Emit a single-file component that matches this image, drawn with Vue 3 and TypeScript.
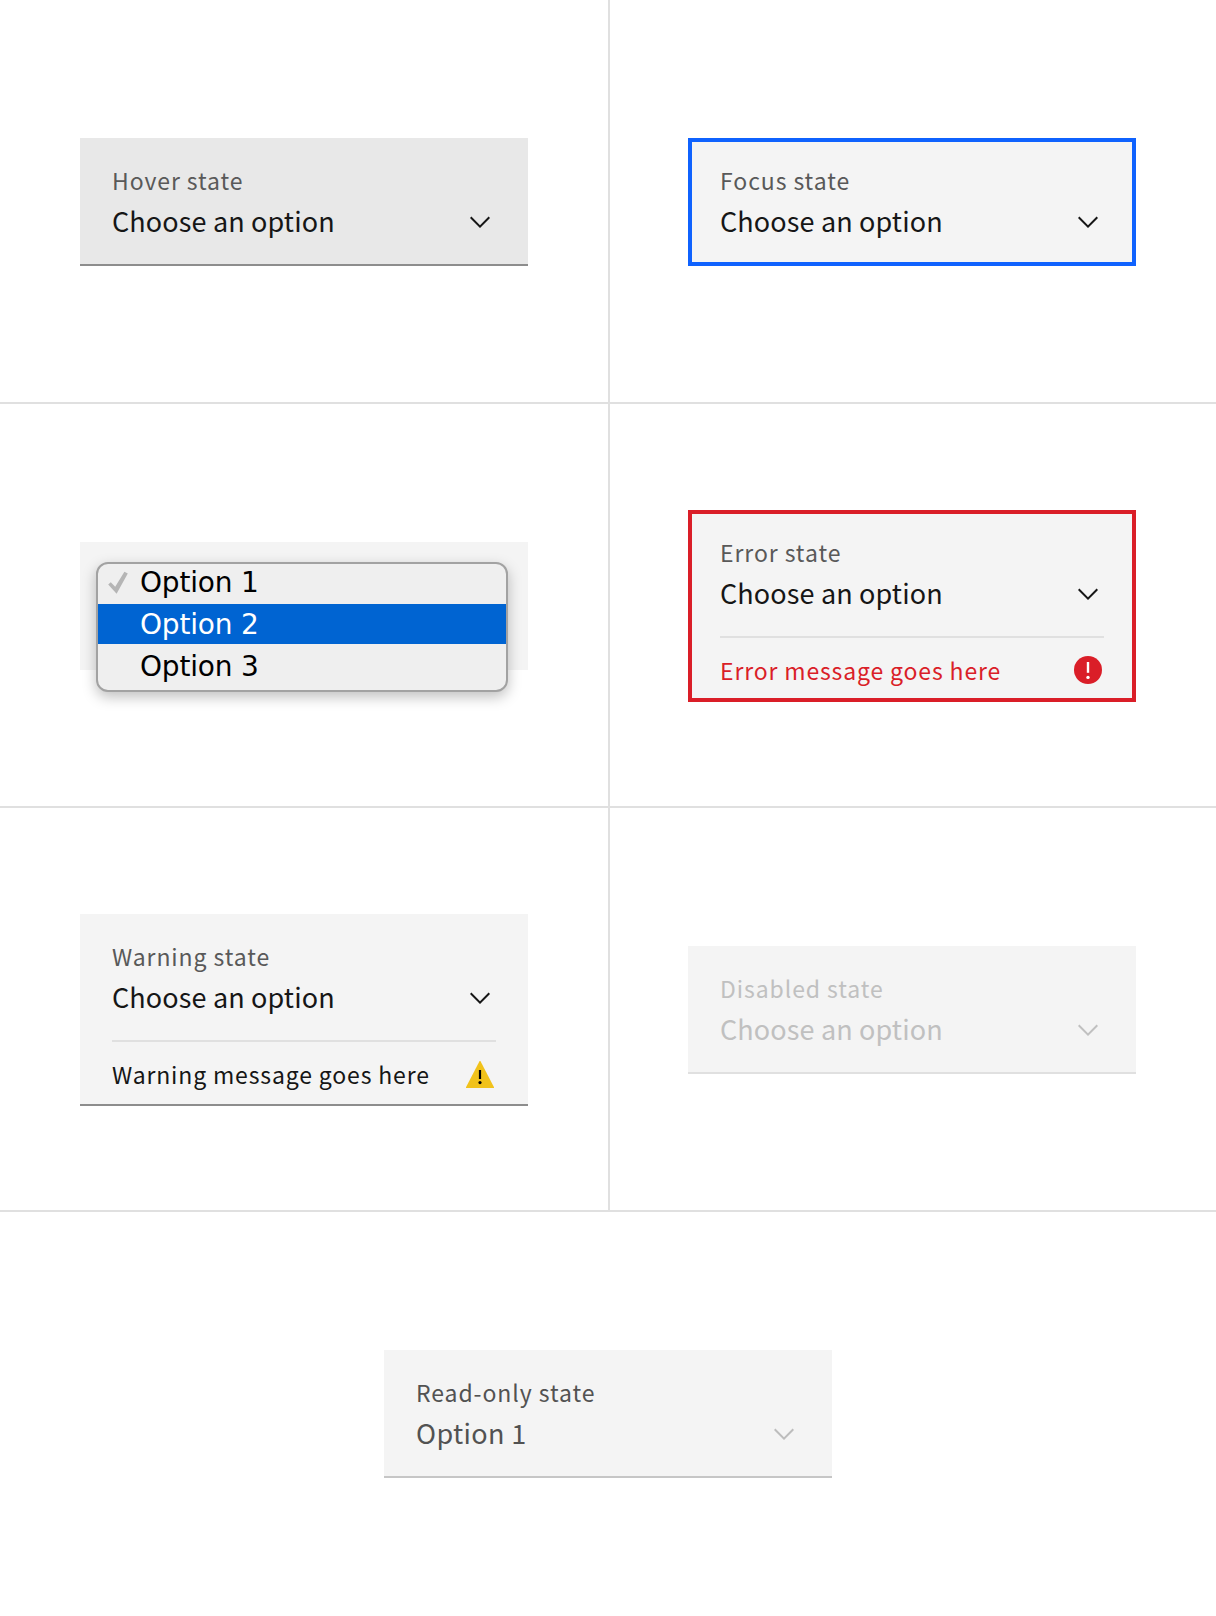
<script setup lang="ts">
interface Field {
  kind: 'hover' | 'focus' | 'open' | 'error' | 'warning' | 'disabled' | 'readonly'
  label: string
  value: string
  message?: string
}

const fields: Field[] = [
  { kind: 'hover', label: 'Hover state', value: 'Choose an option' },
  { kind: 'focus', label: 'Focus state', value: 'Choose an option' },
  { kind: 'open', label: '', value: '' },
  { kind: 'error', label: 'Error state', value: 'Choose an option', message: 'Error message goes here' },
  { kind: 'warning', label: 'Warning state', value: 'Choose an option', message: 'Warning message goes here' },
  { kind: 'disabled', label: 'Disabled state', value: 'Choose an option' },
  { kind: 'readonly', label: 'Read-only state', value: 'Option 1' },
]

const options: string[] = ['Option 1', 'Option 2', 'Option 3']
const checked = 0
const highlighted = 1
</script>

<template>
  <main class="grid">
    <section v-for="field in fields" :key="field.kind" class="cell">
      <div class="select" :class="field.kind">
        <ul v-if="field.kind === 'open'" class="menu">
          <li v-for="(option, i) in options" :key="option" class="option" :class="{ active: i === highlighted }">
            <span class="tick">
              <svg v-if="i === checked" width="20" height="24" viewBox="0 0 20 24">
                <path d="M.2 13.6 2.8 11.2 7.2 15.8 16.4.8 19.8 2.6 8.6 22.8z" fill="#b5b5b5" />
              </svg>
            </span>
            <span class="option-text">{{ option }}</span>
          </li>
        </ul>
        <template v-else>
          <div class="control">
            <div class="texts">
              <span class="label">{{ field.label }}</span>
              <span class="value">{{ field.value }}</span>
            </div>
            <svg class="chevron" width="32" height="32" viewBox="0 0 16 16">
              <path d="M8 11 3 6l.7-.7L8 9.6l4.3-4.3.7.7z" fill="currentColor" />
            </svg>
          </div>
          <div v-if="field.message" class="message">
            <span class="message-text">{{ field.message }}</span>
            <svg v-if="field.kind === 'error'" class="status" width="32" height="32" viewBox="0 0 16 16">
              <circle cx="8" cy="8" r="7" fill="#da1e28" />
              <path d="M7.4 4h1.2v5.4H7.4z" fill="#fff" />
              <circle cx="8" cy="11.7" r=".85" fill="#fff" />
            </svg>
            <svg v-else class="status" width="32" height="32" viewBox="0 0 16 16">
              <path d="M7.8 1.5h.4L15 14.6v.4H1v-.4z" fill="#f1c21b" />
              <path d="M7.45 6h1.1v4.5h-1.1z" />
              <circle cx="8" cy="12.3" r=".8" />
            </svg>
          </div>
        </template>
      </div>
    </section>
  </main>
</template>

<style>
body {
  margin: 0;
  background: #fff;
}
</style>

<style scoped>
.grid {
  display: grid;
  grid-template-columns: 608px 608px;
  grid-auto-rows: 404px;
  width: 1216px;
  font-family: "Noto Sans CJK JP", "Noto Sans", sans-serif;
}
.cell {
  box-sizing: border-box;
  display: flex;
  align-items: center;
  justify-content: center;
  box-shadow: inset 0 -2px #e0e0e0;
}
.cell:nth-child(even) {
  box-shadow: inset 2px -2px #e0e0e0;
}
.cell:last-child {
  grid-column: 1 / -1;
  box-shadow: none;
}
.select {
  box-sizing: border-box;
  width: 448px;
  height: 128px;
  padding: 0 32px;
  background: #f4f4f4;
  color: #161616;
  box-shadow: inset 0 -2px #8d8d8d;
}
.error,
.warning {
  height: 192px;
}
.hover {
  background: #e8e8e8;
}
.focus {
  box-shadow: inset 0 0 0 4px #0f62fe;
}
.error {
  box-shadow: inset 0 0 0 4px #da1e28;
}
.disabled {
  color: #c0c0c0;
  box-shadow: inset 0 -2px #e0e0e0;
}
.readonly {
  color: #525252;
  box-shadow: inset 0 -2px #c6c6c6;
}
.control {
  display: flex;
  justify-content: space-between;
  height: 126px;
}
.texts {
  display: flex;
  flex-direction: column;
  padding-top: 25px;
}
.label,
.message-text {
  font-size: 23px;
  line-height: 34px;
  letter-spacing: 0.92px;
  white-space: nowrap;
}
.label {
  color: #595959;
}
.disabled .label {
  color: inherit;
}
.readonly .label {
  color: #525252;
}
.value {
  padding-top: 4px;
  font-size: 27px;
  line-height: 40px;
  letter-spacing: 0.13px;
  white-space: nowrap;
}
.readonly .value {
  letter-spacing: 0.35px;
}
.chevron {
  flex: none;
  margin-top: 68px;
}
.readonly .chevron {
  color: #bdbdbd;
}
.message {
  display: flex;
  justify-content: space-between;
  border-top: 2px solid #e0e0e0;
}
.message-text {
  padding-top: 15px;
  letter-spacing: 0.85px;
}
.error .message-text {
  color: #da1e28;
}
.status {
  flex: none;
  margin-top: 16px;
}
.open {
  padding: 20px 20px 0 16px;
  box-shadow: none;
}
.menu {
  box-sizing: border-box;
  height: 130px;
  margin: 0;
  padding: 0;
  list-style: none;
  border: 2px solid #a2a2a2;
  border-radius: 12px;
  background: #efefef;
  box-shadow: 0 5px 14px rgba(0, 0, 0, 0.25);
  color: #000;
  font: 28px/38px "DejaVu Sans", sans-serif;
}
.option {
  display: flex;
  height: 40px;
}
.option.active {
  background: #0064d2;
  color: #fff;
  line-height: 42px;
}
.option:last-child {
  line-height: 46px;
}
.tick {
  width: 42px;
  flex: none;
}
.tick svg {
  display: block;
  margin: 7px 0 0 10px;
}
.option-text {
  letter-spacing: -0.2px;
}
</style>
